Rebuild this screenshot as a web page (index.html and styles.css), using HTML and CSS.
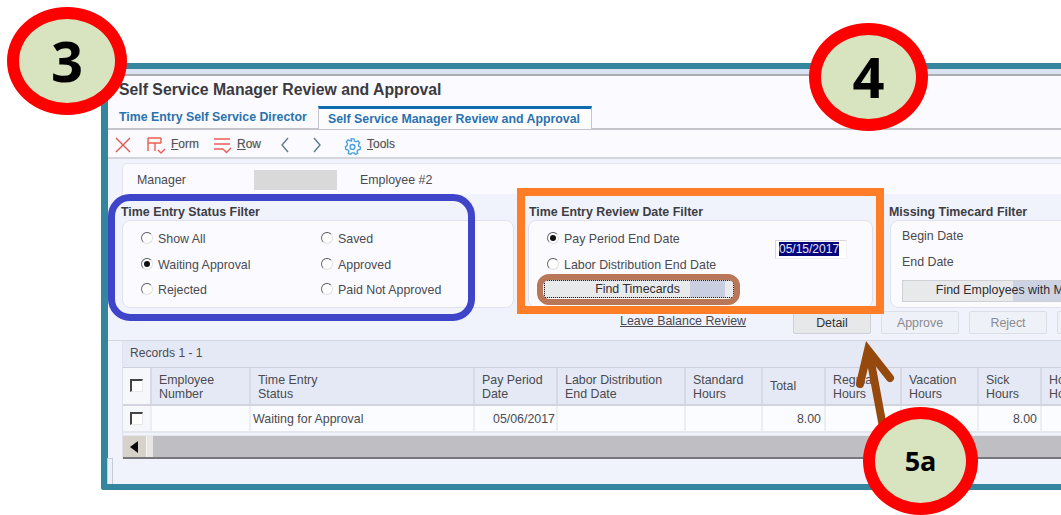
FILE: index.html
```html
<!DOCTYPE html>
<html lang="en">
<head>
<meta charset="utf-8">
<title>Self Service Manager Review and Approval</title>
<link rel="stylesheet" href="styles.css">
</head>
<body>
<div class="stage">
  <main class="window">
    <div class="window-top"></div>
    <h1 class="form-title">Self Service Manager Review and Approval</h1>
    <nav class="tabs">
      <a class="tab">Time Entry Self Service Director</a>
      <a class="tab tab-active">Self Service Manager Review and Approval</a>
    </nav>
    <div class="toolbar">
      <svg class="ic ic-close" viewBox="0 0 16 16"><path d="M1 1l14 14M15 1L1 15"/></svg>
      <svg class="ic ic-form" viewBox="0 0 20 20"><path d="M1 2h13M1 7h13M1 2v13M8 7v8M14 2v5M11 14l3 3 4-4"/></svg>
      <span class="tool tool-form"><u>F</u>orm</span>
      <svg class="ic ic-row" viewBox="0 0 20 18"><path d="M1 2h16M1 7h16M1 12h9M10 12l3.500 3.500L18 11"/></svg>
      <span class="tool tool-row"><u>R</u>ow</span>
      <svg class="ic ic-prev" viewBox="0 0 10 16"><path d="M8 1L2 8l6 7"/></svg>
      <svg class="ic ic-next" viewBox="0 0 10 16"><path d="M2 1l6 7-6 7"/></svg>
      <svg class="ic ic-gear" viewBox="0 0 18 18"><path d="M7.500 1h3l.5 2.200 1.700.8 2-1.100 1.900 2.200-1.300 1.800.3 1.900L17.500 9.500l-.5 2.700-2.200.3-1 1.600.7 2.100-2.500 1.200-1.400-1.700H8.500L7 17.400l-2.500-1.200.7-2.100-1-1.600L2 12.200 1.500 9.500l1.900-1.700.3-1.900L2.400 4.100l1.900-2.200 2 1.100L8 3.200z"/><circle cx="9" cy="9.500" r="2.600"/></svg>
      <span class="tool tool-tools"><u>T</u>ools</span>
    </div>

    <div class="form-body">
      <div class="manager-panel">
        <span class="manager-label">Manager</span>
        <span class="manager-value"></span>
        <span class="manager-name">Employee #2</span>
      </div>

      <div class="filters">
        <section class="filter filter-status">
          <h2 class="filter-title">Time Entry Status Filter</h2>
          <div class="filter-box status-grid">
            <label class="opt"><span class="radio"></span>Show All</label>
            <label class="opt"><span class="radio"></span>Saved</label>
            <label class="opt"><span class="radio radio-on"></span>Waiting Approval</label>
            <label class="opt"><span class="radio"></span>Approved</label>
            <label class="opt"><span class="radio"></span>Rejected</label>
            <label class="opt"><span class="radio"></span>Paid Not Approved</label>
          </div>
        </section>
        <section class="filter filter-date">
          <h2 class="filter-title">Time Entry Review Date Filter</h2>
          <div class="filter-box date-box">
            <div class="date-choice">
              <div class="date-options">
                <label class="opt"><span class="radio radio-on"></span>Pay Period End Date</label>
                <label class="opt"><span class="radio"></span>Labor Distribution End Date</label>
              </div>
              <div class="date-input"><span class="date-selected">05/15/2017</span></div>
            </div>
            <button class="find-btn find-focus">Find Timecards</button>
          </div>
        </section>
        <section class="filter filter-missing">
          <h2 class="filter-title">Missing Timecard Filter</h2>
          <div class="filter-box missing-box">
            <span class="missing-label">Begin Date</span>
            <span class="missing-label">End Date</span>
            <button class="find-btn find-wide">Find Employees with Missing Timecards</button>
          </div>
        </section>
      </div>

      <div class="actions">
        <a class="leave-link">Leave Balance Review</a>
        <button class="act act-main">Detail</button>
        <button class="act">Approve</button>
        <button class="act">Reject</button>
        <button class="act"></button>
      </div>

      <section class="grid-panel">
        <div class="records">Records 1 - 1</div>
        <div class="grid-row grid-head">
          <div class="cell cell-check"><span class="check"></span></div>
          <div class="cell">Employee<br>Number</div>
          <div class="cell">Time Entry<br>Status</div>
          <div class="cell">Pay Period<br>Date</div>
          <div class="cell">Labor Distribution<br>End Date</div>
          <div class="cell">Standard<br>Hours</div>
          <div class="cell">Total</div>
          <div class="cell">Regular<br>Hours</div>
          <div class="cell">Vacation<br>Hours</div>
          <div class="cell">Sick<br>Hours</div>
          <div class="cell">Holiday<br>Hours</div>
        </div>
        <div class="grid-row grid-data">
          <div class="cell cell-check"><span class="check"></span></div>
          <div class="cell"></div>
          <div class="cell cell-status">Waiting for Approval</div>
          <div class="cell cell-num cell-date">05/06/2017</div>
          <div class="cell"></div>
          <div class="cell"></div>
          <div class="cell cell-num">8.00</div>
          <div class="cell"></div>
          <div class="cell"></div>
          <div class="cell cell-num">8.00</div>
          <div class="cell"></div>
        </div>
        <div class="scrollbar">
          <div class="scroll-btn"><span class="scroll-arrow"></span></div>
          <div class="scroll-grip"></div>
        </div>
      </section>
    </div>
    <div class="side-handle"></div>
  </main>

  <!-- Callouts drawn over the form -->
  <div class="outline outline-blue"></div>
  <div class="outline outline-orange"></div>
  <div class="outline outline-brown"></div>
  <svg class="arrow" viewBox="0 0 60 90"><path d="M35 84L22 14"/><path d="M12 41L20 7l22 28"/></svg>
  <div class="badge badge-3">3</div>
  <div class="badge badge-4">4</div>
  <div class="badge badge-5a">5a</div>
</div>
</body>
</html>
```
FILE: styles.css
```css
* { box-sizing: border-box; }

html, body {
  margin: 0;
  background: #fff;
}

.stage {
  position: relative;
  width: 1061px;
  height: 515px;
  overflow: hidden;
  padding: 63px 0 0 101px;
  font-family: "Liberation Sans", Arial, sans-serif;
  font-size: 12.400px;
  color: #4a4a50;
}

/* Form window */
.window {
  position: relative;
  width: 1100px;
  height: 427px;
  border: solid #34869f;
  border-width: 6px 0 6px 7px;
  border-radius: 3px 0 0 3px;
  background: #fafaff;
}

.window-top {
  height: 7px;
  background: #dbe3f2;
  border-bottom: 2px solid #adacb2;
}

.form-title {
  margin: 0;
  padding: 4px 0 0 11px;
  height: 30px;
  font-size: 15.800px;
  line-height: 19px;
  font-weight: 700;
  color: #3a3a40;
  white-space: nowrap;
}

.tabs {
  display: flex;
  align-items: flex-end;
  height: 24px;
  padding-left: 11px;
  border-bottom: 2px solid #c4c5cc;
}

.tab {
  font-size: 12.350px;
  font-weight: 700;
  color: #2b72ae;
  line-height: 15px;
  padding-bottom: 3px;
  width: 199px;
  white-space: nowrap;
}

.tab-active {
  width: 274px;
  height: 23px;
  margin-bottom: -1px;
  padding: 3px 0 0 9px;
  background: #fdfdff;
  border: 1px solid #c4c5cc;
  border-top: 3px solid #0f6cb0;
  border-bottom: 0;
}

.toolbar {
  position: relative;
  height: 29px;
  border-bottom: 2px solid #d4d5dc;
  background: #fafaff;
}

.ic {
  position: absolute;
  fill: none;
  stroke-width: 1.400;
}

.ic-close { left: 7px; top: 7px; width: 16px; height: 16px; stroke: #e2564c; }
.ic-form { left: 39px; top: 6px; width: 20px; height: 20px; stroke: #ea5d50; }
.ic-row { left: 105px; top: 7px; width: 20px; height: 18px; stroke: #ea5d50; }
.ic-prev { left: 172px; top: 7px; width: 10px; height: 16px; stroke: #5f7d92; }
.ic-next { left: 204px; top: 7px; width: 10px; height: 16px; stroke: #5f7d92; }
.ic-gear { left: 236px; top: 8px; width: 17px; height: 17px; stroke: #45a0e0; }

.tool {
  position: absolute;
  top: 7px;
  color: #555;
  line-height: 15px;
  text-shadow: 0 0 1px #bbb;
  font-size: 12px;
}

.tool-form { left: 63px; }
.tool-row { left: 129px; }
.tool-tools { left: 259px; }

/* Form content */
.form-body {
  height: 325px;
  padding: 4px 0 0 14px;
  background: #f0f3fb;
}

.manager-panel {
  display: flex;
  align-items: center;
  height: 31px;
  padding: 2px 0 0 14px;
  border: 1px solid #e3e5ee;
  border-bottom: 0;
  border-radius: 5px 0 0 0;
  background: #fafaff;
}

.manager-label { width: 117px; }

.manager-value {
  width: 83px;
  height: 20px;
  background: #d9d9da;
}

.manager-name { margin-left: 23px; }

.filters {
  display: flex;
  padding-top: 11px;
  height: 117px;
}

.filter-title {
  margin: 0 0 1px -1px;
  height: 14px;
  font-size: 12.400px;
  line-height: 14px;
  font-weight: 700;
  color: #3d3d44;
  white-space: nowrap;
}

.filter-box {
  height: 88px;
  border: 1px solid #dfe2ec;
  border-radius: 8px;
  background: #fbfbff;
}

.filter-status { width: 406px; }
.filter-date { width: 362px; }
.filter-date .filter-title { margin-left: 1px; }
.filter-missing { width: 300px; }

.status-grid {
  width: 392px;
  display: grid;
  grid-template-columns: 180px 180px;
  grid-template-rows: 26px 25px 25px;
  padding: 5px 0 0 18px;
  align-items: center;
}

.opt {
  display: flex;
  align-items: center;
  gap: 5px;
  white-space: nowrap;
}

.radio {
  position: relative;
  flex: none;
  width: 12px;
  height: 12px;
  margin-top: -2px;
  border-radius: 50%;
  background: #fff;
  border: 1px solid #e0e0e0;
  border-top-color: #55555d;
  border-left-color: #6a6a72;
}

.radio-on::after {
  content: "";
  position: absolute;
  left: 2px;
  top: 2px;
  width: 6px;
  height: 6px;
  border-radius: 50%;
  background: #111;
}

.date-box {
  width: 345px;
  padding: 5px 0 0 18px;
}

.date-choice {
  display: flex;
  height: 51px;
}

.date-options {
  display: grid;
  grid-template-rows: 26px 25px;
  align-items: center;
  width: 228px;
}

.date-input {
  width: 72px;
  height: 19px;
  margin-top: 14px;
  padding: 1px 0 0 3px;
  background: #fff;
  border: 1px solid #d6d7de;
  border-bottom-color: #f2f2f6;
  border-right-color: #f2f2f6;
  font-size: 12px;
  line-height: 15px;
}

.date-selected {
  background: #05057a;
  color: #e8e8ff;
}

.find-btn {
  display: block;
  font: inherit;
  color: #2e2e32;
  border: 1px solid #cfd0d4;
  background: linear-gradient(90deg, #e9eaec 0 85%, #c9cfe0 85% 100%);
  padding: 0;
  white-space: nowrap;
}

.find-focus {
  width: 190px;
  height: 18px;
  margin: 3px 0 0 -3px;
  padding-right: 3px;
  line-height: 14px;
  outline: 1px dotted #222;
  outline-offset: -1px;
  background: linear-gradient(90deg, #e9eaec 0 77%, #c9cfe0 77% 96%, #e9eaec 96%);
}

.missing-box {
  padding: 8px 0 0 11px;
  display: flex;
  flex-direction: column;
  align-items: flex-start;
}

.missing-label {
  height: 26px;
  line-height: 14px;
}

.find-wide {
  width: 288px;
  height: 22px;
  margin-top: -1px;
  padding-bottom: 2px;
  background: linear-gradient(90deg, #e8e9eb 0 110px, #cdd3e2 110px);
}

.actions {
  display: flex;
  align-items: flex-start;
  height: 30px;
  margin-left: -14px;
  padding-left: 512px;
  border-bottom: 1px solid #d5d6de;
}

.leave-link {
  width: 173px;
  padding-top: 3px;
  line-height: 15px;
  text-decoration: underline;
  color: #4a4a50;
}

.act {
  width: 78px;
  height: 23px;
  margin-right: 10px;
  font: inherit;
  color: #8b8b90;
  border: 1px solid #dcdfe8;
  border-radius: 2px;
  background: #eff1f8;
  padding: 0;
}

.act-main {
  color: #333;
  background: #e7e8ea;
  border-color: #cfd0d6;
}

/* Records grid */
.grid-panel {
  border-left: 1px solid #dfe2ec;
}

.records {
  height: 27px;
  padding: 5px 0 0 7px;
  font-size: 12.100px;
  line-height: 15px;
  background: #e5e9f5;
  border-bottom: 1px solid #cdd0dc;
}

.grid-row {
  display: grid;
  grid-template-columns: 29px 99px 224px 83px 128px 77px 63px 76px 77px 63px 100px;
}

.grid-head {
  height: 38px;
  background: #e5e9f5;
  border-bottom: 2px solid #d2d5e0;
}

.grid-data {
  height: 27px;
  background: #fbfcff;
  border-bottom: 2px solid #e4e6ee;
}

.cell {
  position: relative;
  padding: 5px 0 0 7px;
  line-height: 14px;
  border-right: 2px solid #d7dae5;
  white-space: nowrap;
}

.grid-data .cell {
  padding-top: 6px;
  line-height: 15px;
  border-right-color: #eceef4;
}

.grid-head .cell:nth-child(7) {
  padding-top: 11px;
}

.cell-check {
  padding: 10px 0 0 7px;
  background: #f6f7fb;
}

.grid-data .cell-status { padding-left: 2px; }

.grid-data .cell-num {
  padding-left: 0;
  padding-right: 3px;
  text-align: right;
}

.grid-data .cell-date { padding-right: 1px; }

.check {
  display: block;
  width: 13px;
  height: 13px;
  margin-top: 1px;
  background: #fff;
  border: 1px solid #e8e8ea;
  border-top: 2px solid #444;
  border-left: 2px solid #444;
}

.grid-data .cell-check { padding-top: 5px; }

.scrollbar {
  display: flex;
  height: 24px;
  margin-top: 2px;
  background: #bfbec2;
  border-top: 1px solid #e6e6ea;
  border-bottom: 2px solid #76767c;
}

.scroll-btn {
  display: flex;
  align-items: center;
  width: 24px;
  padding-left: 7px;
  background: #d6d2ca;
  border-right: 1px solid #f2f2f2;
}

.scroll-arrow {
  width: 0;
  height: 0;
  border: solid transparent;
  border-width: 6px 8px 6px 0;
  border-right-color: #0a0a0a;
}

.scroll-grip {
  width: 6px;
  background: #e8e6e2;
}

.side-handle {
  position: absolute;
  left: -1px;
  bottom: 0;
  width: 6px;
  height: 26px;
  background: #eef0f8;
  border: 1px solid #c8ccd6;
  border-bottom: 0;
}

/* Callouts */
.outline {
  position: absolute;
  border-style: solid;
}

.outline-blue {
  left: 108px;
  top: 194px;
  width: 367px;
  height: 127px;
  border-width: 7px;
  border-color: #3f45c8;
  border-radius: 22px;
}

.outline-orange {
  left: 517px;
  top: 188px;
  width: 367px;
  height: 126px;
  border-width: 8px;
  border-color: #ff7d26;
}

.outline-brown {
  left: 537px;
  top: 274px;
  width: 203px;
  height: 31px;
  border-width: 6px;
  border-color: #b9775a;
  border-radius: 12px;
}

.arrow {
  position: absolute;
  left: 848px;
  top: 343px;
  width: 60px;
  height: 90px;
  overflow: visible;
  fill: none;
  stroke: #96490c;
  stroke-width: 8;
  stroke-linecap: round;
  stroke-linejoin: miter;
}

.badge {
  position: absolute;
  display: flex;
  align-items: center;
  justify-content: center;
  padding-bottom: 2px;
  border: 12px solid #fe0000;
  border-radius: 50%;
  background: #d8e3bf;
  color: #000;
  font-family: "Open Sans", sans-serif;
  font-weight: 700;
  font-size: 56px;
  line-height: 1;
}

.badge-3 { left: 7px; top: 7px; width: 120px; height: 108px; }
.badge-4 { left: 809px; top: 23px; width: 119px; height: 108px; }
.badge-5a { left: 863px; top: 407px; width: 115px; height: 108px; font-size: 27px; }
```
